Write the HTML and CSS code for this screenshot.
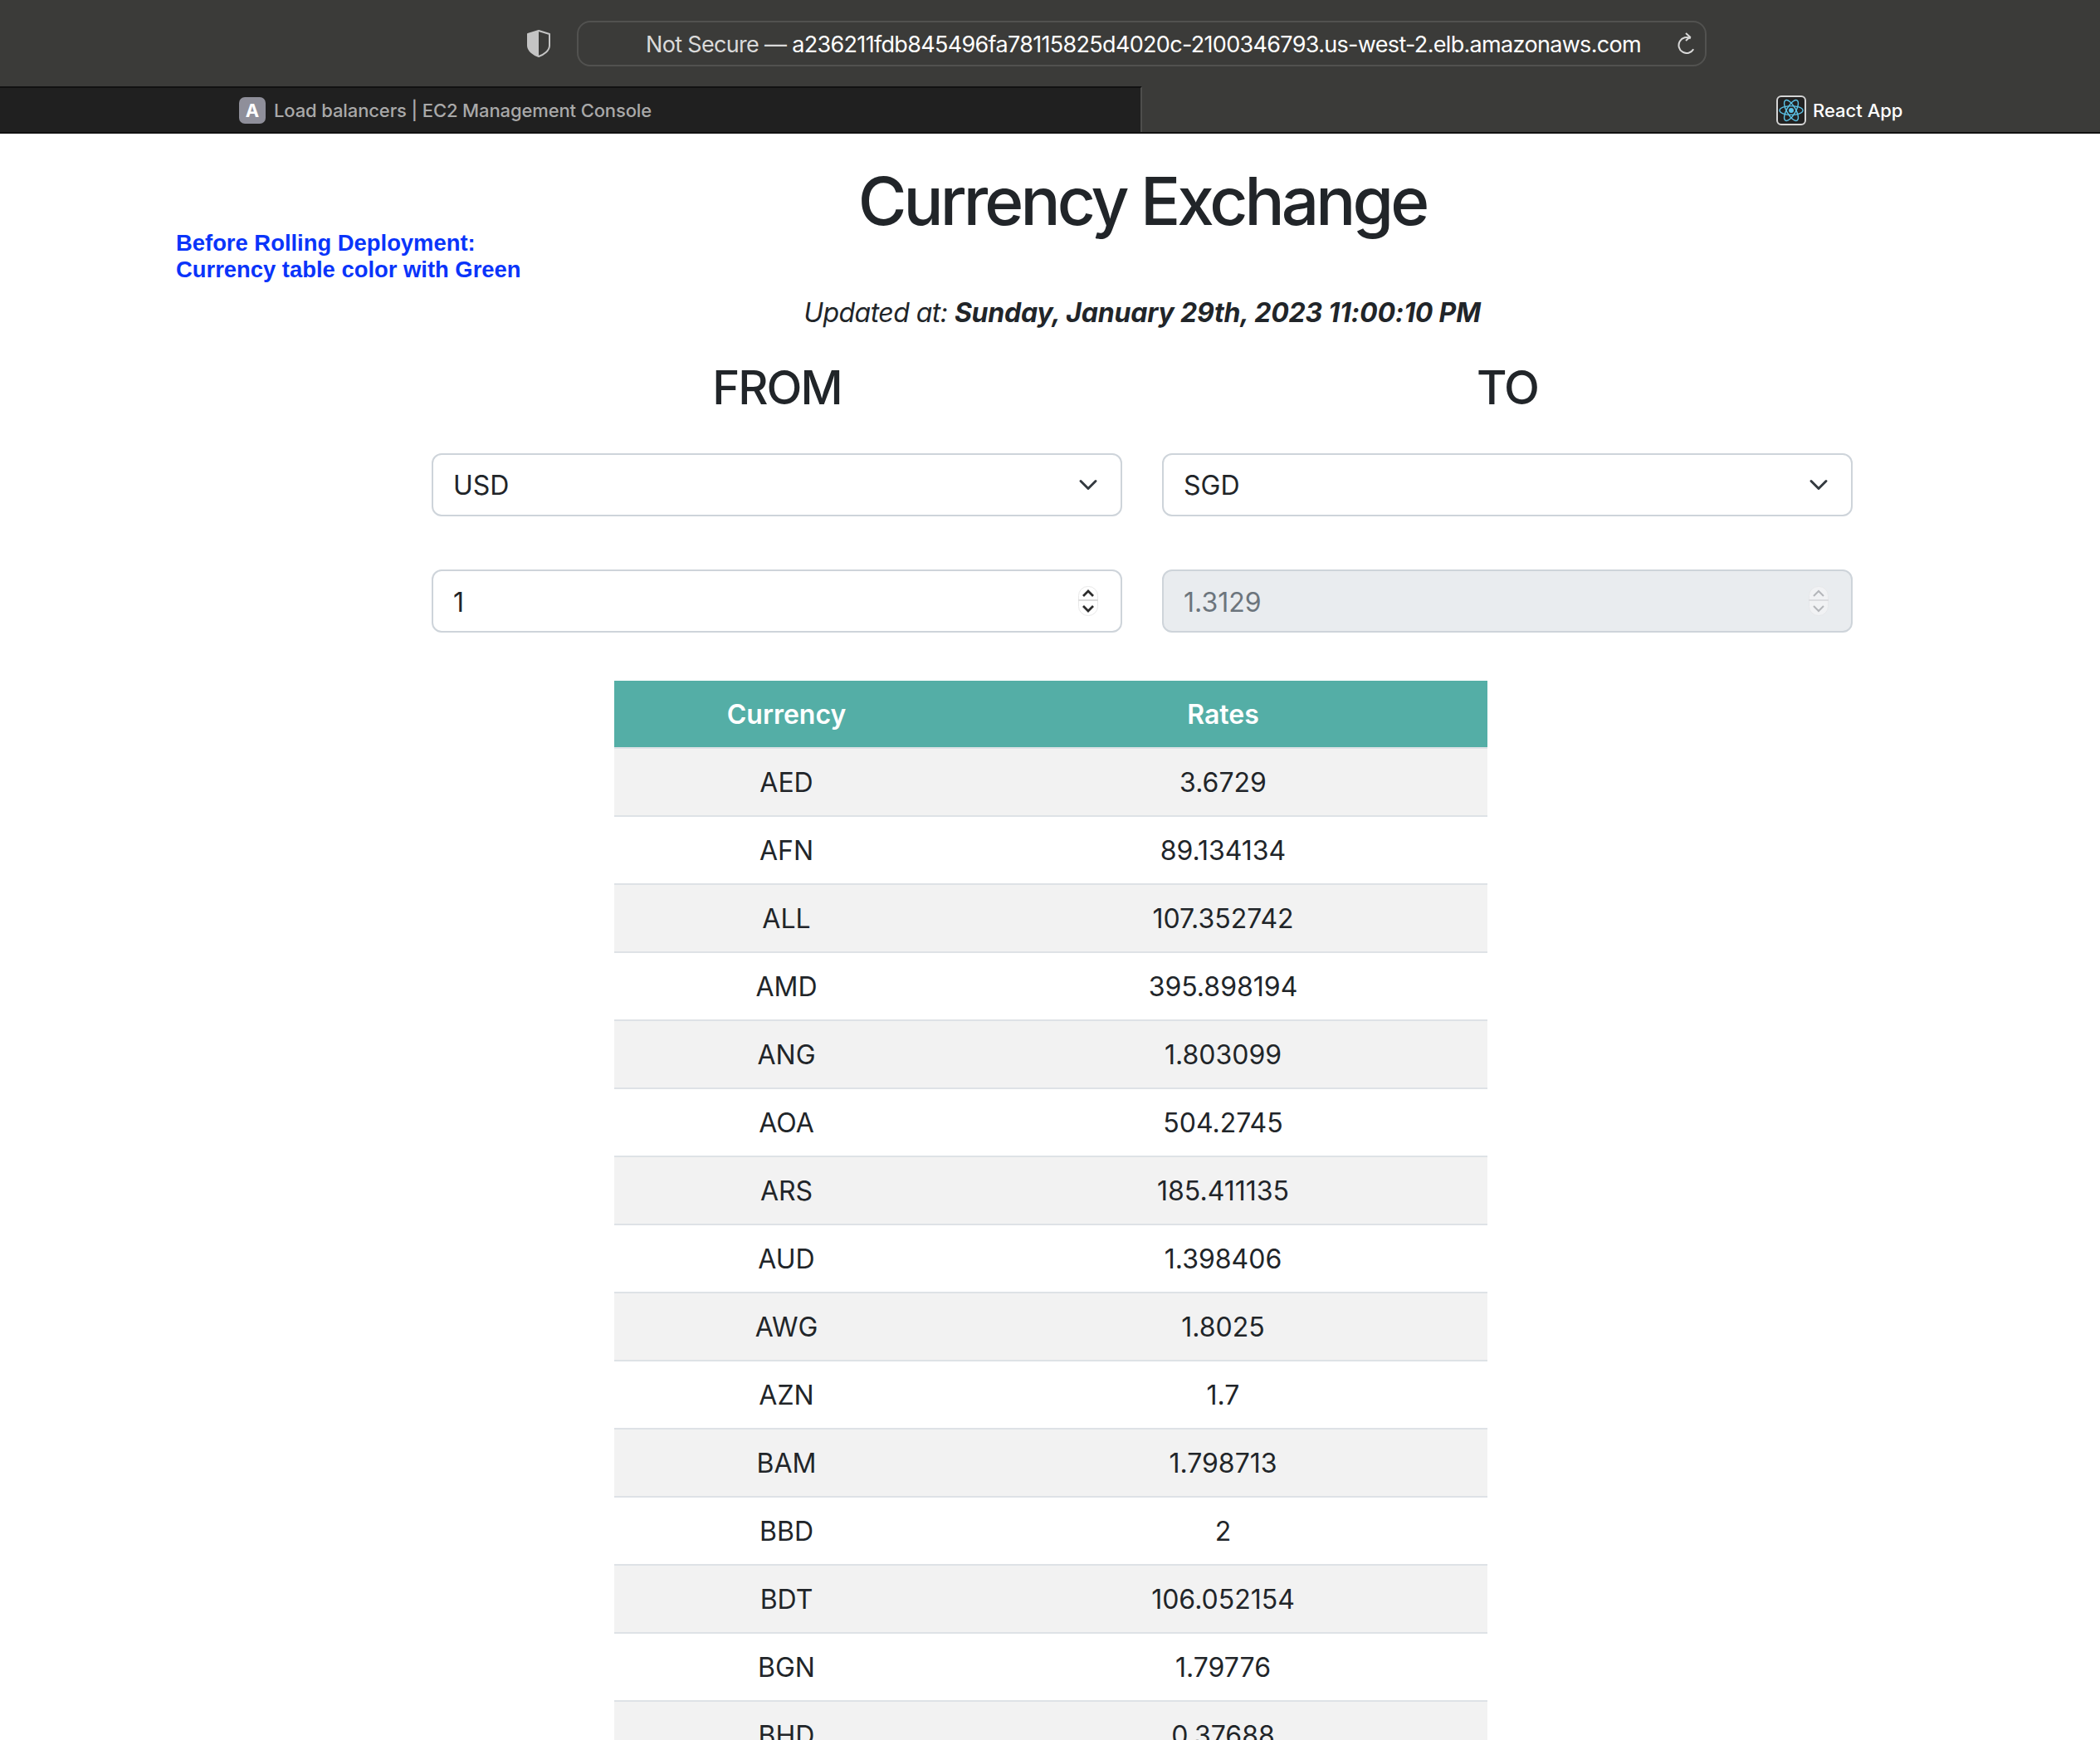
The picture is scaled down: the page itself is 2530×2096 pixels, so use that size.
FILE: index.html
```html
<!DOCTYPE html>
<html lang="en">
<head>
  <meta charset="UTF-8" />
  <title>React App</title>
  <link rel="stylesheet" href="styles.css">
</head>
<body>
  <header class="chrome">
    <div class="toolbar">
      <svg class="shield" width="28" height="33" viewBox="0 0 28 33">
        <path d="M14 1 L27 5 V19 C27 25 20 30 14 32 C8 30 1 25 1 19 V5 Z" fill="none" stroke="#c4c4c4" stroke-width="2" stroke-linejoin="round"/>
        <path d="M14 1 L1 5 V19 C1 25 8 30 14 32 Z" fill="#c4c4c4"/>
      </svg>
      <div class="url-bar">
        <div class="url"><span class="url-note">Not Secure — </span>a236211fdb845496fa78115825d4020c-2100346793.us-west-2.elb.amazonaws.com</div>
        <svg class="reload" width="22" height="26" viewBox="0 0 22 26">
          <path d="M11 6 A9.5 9.5 0 1 0 20.5 15.5" fill="none" stroke="#d8d8d8" stroke-width="2" transform="rotate(30 11 15.5)"/>
          <path d="M10 1 L15 5.5 L10 10" fill="none" stroke="#d8d8d8" stroke-width="2"/>
        </svg>
      </div>
    </div>
    <div class="tabs">
      <div class="tab tab-left">
        <span class="tab-badge">A</span>
        <span>Load balancers | EC2 Management Console</span>
      </div>
      <div class="tab tab-right">
        <svg class="react-icon" width="36" height="36" viewBox="0 0 36 36">
          <rect x="1" y="1" width="34" height="34" rx="5" fill="#222" stroke="#d4d4d4" stroke-width="2"/>
          <g fill="none" stroke="#5cc4e8" stroke-width="1.4">
            <ellipse cx="18" cy="18" rx="14" ry="5.4"/>
            <ellipse cx="18" cy="18" rx="14" ry="5.4" transform="rotate(60 18 18)"/>
            <ellipse cx="18" cy="18" rx="14" ry="5.4" transform="rotate(120 18 18)"/>
          </g>
          <circle cx="18" cy="18" r="3" fill="#5cc4e8"/>
        </svg>
        <span>React App</span>
      </div>
    </div>
  </header>

  <div class="page">
    <div class="note">Before Rolling Deployment:<br>Currency table color with Green</div>

    <main class="main">
      <h1>Currency Exchange</h1>
      <p class="updated">Updated at: <strong>Sunday, January 29th, 2023 11:00:10 PM</strong></p>

      <div class="converter">
        <h2>FROM</h2>
        <h2>TO</h2>

        <div class="field">
          <select>
            <option selected>USD</option>
            <option>SGD</option>
          </select>
          <svg class="chevron" width="24" height="24" viewBox="0 0 16 16"><path d="M2 5l6 6 6-6" fill="none" stroke="#343a40" stroke-width="2" stroke-linecap="round" stroke-linejoin="round"/></svg>
        </div>
        <div class="field">
          <select>
            <option>USD</option>
            <option selected>SGD</option>
          </select>
          <svg class="chevron" width="24" height="24" viewBox="0 0 16 16"><path d="M2 5l6 6 6-6" fill="none" stroke="#343a40" stroke-width="2" stroke-linecap="round" stroke-linejoin="round"/></svg>
        </div>

        <div class="field">
          <input type="text" value="1">
          <svg class="spinner" width="24" height="36" viewBox="0 0 24 36">
            <rect x="0.5" y="0.5" width="23" height="35" rx="11" fill="#fff" stroke="#e8e8e8"/>
            <rect x="0" y="16" width="24" height="2" fill="#dcdcdc"/>
            <path d="M6 12l6-6 6 6M6 24l6 6 6-6" fill="none" stroke="#2c2c2c" stroke-width="2.8"/>
          </svg>
        </div>
        <div class="field field-disabled">
          <input type="text" value="1.3129" disabled>
          <svg class="spinner" width="24" height="36" viewBox="0 0 24 36">
            <rect x="0.5" y="0.5" width="23" height="35" rx="11" fill="#f1f2f4" stroke="#e6e7ea"/>
            <rect x="0" y="16" width="24" height="2" fill="#dcdde0"/>
            <path d="M6 12l6-6 6 6M6 24l6 6 6-6" fill="none" stroke="#b4b6ba" stroke-width="2"/>
          </svg>
        </div>
      </div>

      <table class="rates">
        <thead>
          <tr><th class="col-currency">Currency</th><th>Rates</th></tr>
        </thead>
        <tbody>
          <tr><td>AED</td><td>3.6729</td></tr>
          <tr><td>AFN</td><td>89.134134</td></tr>
          <tr><td>ALL</td><td>107.352742</td></tr>
          <tr><td>AMD</td><td>395.898194</td></tr>
          <tr><td>ANG</td><td>1.803099</td></tr>
          <tr><td>AOA</td><td>504.2745</td></tr>
          <tr><td>ARS</td><td>185.411135</td></tr>
          <tr><td>AUD</td><td>1.398406</td></tr>
          <tr><td>AWG</td><td>1.8025</td></tr>
          <tr><td>AZN</td><td>1.7</td></tr>
          <tr><td>BAM</td><td>1.798713</td></tr>
          <tr><td>BBD</td><td>2</td></tr>
          <tr><td>BDT</td><td>106.052154</td></tr>
          <tr><td>BGN</td><td>1.79776</td></tr>
          <tr><td>BHD</td><td>0.37688</td></tr>
        </tbody>
      </table>
    </main>
  </div>
</body>
</html>
```

FILE: styles.css
```css
* {
  box-sizing: border-box;
  margin: 0;
  padding: 0;
}

html, body {
  height: 100%;
  overflow: hidden;
}

body {
  background: #fff;
  color: #212529;
  font-family: Inter, 'Noto Sans', sans-serif;
  font-size: 32px;
  line-height: 48px;
}

/* browser window */
.chrome {
  background: #3b3b39;
}

.toolbar {
  display: flex;
  align-items: center;
  height: 104px;
  padding: 0 0 0 635px;
}

.shield {
  margin-right: 32px;
}

.url-bar {
  display: flex;
  align-items: center;
  width: 1361px;
  height: 55px;
  padding: 0 11px 0 81px;
  border: 2px solid #525250;
  border-radius: 16px;
}

.url {
  flex: 1;
  padding-top: 3px;
  color: #fff;
  font-size: 27px;
  letter-spacing: -0.68px;
  line-height: 34px;
  white-space: nowrap;
}

.url-note {
  color: #dadada;
}

.tabs {
  display: flex;
  height: 57px;
  border-bottom: 2px solid #111;
  font-size: 22px;
  font-weight: 500;
  line-height: 30px;
}

.tab {
  display: flex;
  align-items: center;
  border-top: 2px solid transparent;
}

.tab-left {
  width: 1376px;
  padding-left: 288px;
  background: #202020;
  border-top-color: #111;
  border-right: 2px solid #4e4e4c;
  color: #a9a9a9;
  letter-spacing: -0.12px;
}

.tab-right {
  flex: 1;
  padding-left: 764px;
  color: #fff;
}

.tab-badge {
  width: 32px;
  height: 32px;
  margin-right: 10px;
  background: #8f8f9a;
  border-radius: 7px;
  color: #fff;
  font-size: 22px;
  font-weight: 700;
  line-height: 32px;
  text-align: center;
}

.react-icon {
  margin-right: 8px;
}

/* page */
.page {
  display: grid;
}

.note, .main {
  grid-area: 1 / 1;
}

.note {
  justify-self: start;
  z-index: 1;
  margin: 116px 0 0 212px;
  color: #0a34fa;
  font-family: 'Liberation Sans', Arial, sans-serif;
  font-size: 27.4px;
  font-weight: 700;
  line-height: 32px;
}

.main {
  margin-left: 222px;
  text-align: center;
}

h1 {
  margin-top: 33px;
  font-size: 80px;
  font-weight: 500;
  letter-spacing: -3.9px;
  line-height: 96px;
}

.updated {
  margin-top: 63px;
  font-style: italic;
  letter-spacing: -0.55px;
}

.updated strong {
  font-weight: 700;
  letter-spacing: -0.2px;
}

.converter {
  display: grid;
  grid-template-columns: 832px 832px;
  column-gap: 48px;
  width: 1712px;
  margin: 32px auto 0;
}

h2 {
  height: 113px;
  font-size: 56px;
  font-weight: 500;
  letter-spacing: -2px;
  line-height: 68px;
}

.field {
  display: flex;
  align-items: center;
  height: 76px;
  margin-bottom: 64px;
  padding-right: 27px;
  background: #fff;
  border: 2px solid #ced4da;
  border-radius: 12px;
}

.field-disabled {
  background: #e9ecef;
}

.field select, .field input {
  flex: 1;
  min-width: 0;
  height: 100%;
  padding: 2px 0 0 24px;
  appearance: none;
  background: transparent;
  border: none;
  outline: none;
  color: #212529;
  font: inherit;
}

.field input:disabled {
  color: #6c757d;
}

/* table */
.rates {
  width: 1052px;
  margin: -6px 0 0 518px;
  border-collapse: collapse;
  table-layout: fixed;
}

.rates th, .rates td {
  padding: 17px 8px 15px;
  border-bottom: 2px solid #dee2e6;
  text-align: center;
}

.rates th {
  background: #54aea6;
  color: #fff;
  font-weight: 600;
}

.col-currency {
  width: 415px;
}

.rates tbody tr:nth-child(odd) {
  background: #f2f2f2;
}
```
